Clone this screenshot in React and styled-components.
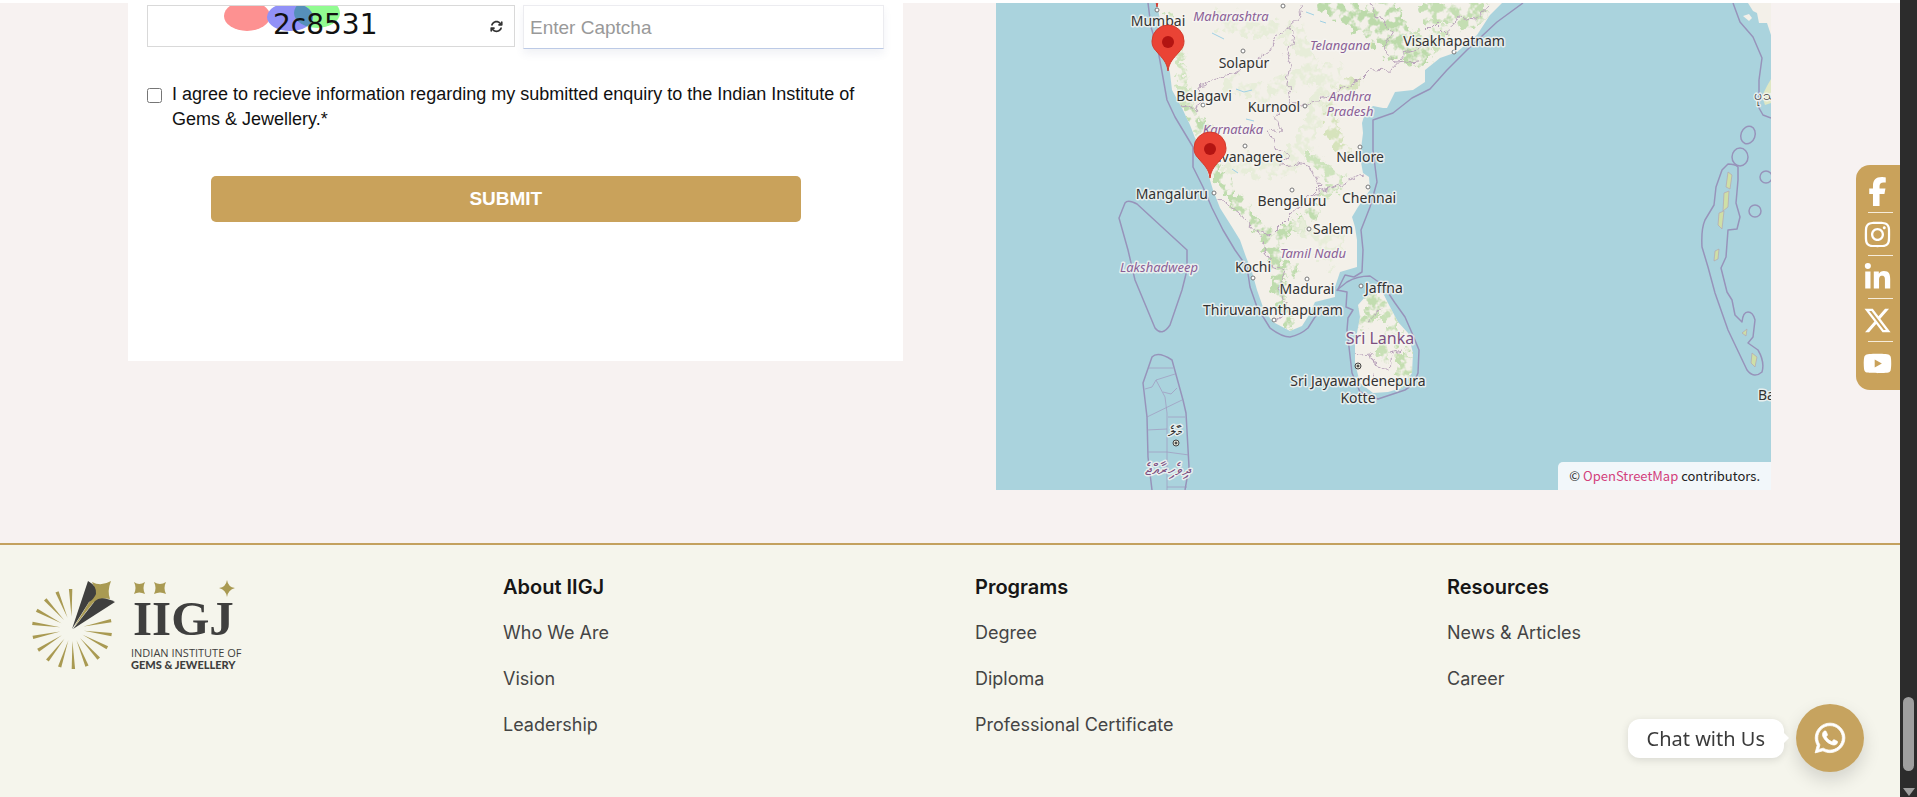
import React from 'react'
import styled, { createGlobalStyle } from "styled-components"
import { FaFacebookF, FaInstagram, FaLinkedinIn, FaXTwitter, FaYoutube, FaWhatsapp, FaArrowsRotate } from "react-icons/fa6"


const GlobalStyle = createGlobalStyle`
* {
  box-sizing: border-box;
}
body {
  margin: 0;
  background-color: #ffffff;
  font-family: "Liberation Sans", Arial, sans-serif;
}
a {
  text-decoration: none;
}
`

const Shell = styled.div`
display: flex;
height: 100vh;
overflow: hidden;
`
const Page = styled.div`
flex: 1;
min-width: 0;
display: flex;
flex-direction: column;
padding-top: 3px;
`

/* enquiry section */
const Enquiry = styled.section`
display: grid;
grid-template-columns: 1fr 1fr;
column-gap: 93px;
align-items: start;
padding: 0 129px 53px 128px;
background-color: #f7f2f1;
`
const Form = styled.form`
display: flex;
flex-direction: column;
padding: 2px 19px 139px;
background-color: #ffffff;
`
const CaptchaRow = styled.div`
display: grid;
grid-template-columns: 368px 1fr;
column-gap: 8px;
align-items: start;
`
const CaptchaBox = styled.div`
position: relative;
display: flex;
align-items: center;
justify-content: center;
height: 42px;
border: 1px solid #d9d9d9;
overflow: hidden;
`
const CaptchaSvg = styled.svg`
display: block;
width: 250px;
height: 40px;
`
const Refresh = styled.button`
position: absolute;
right: 11px;
top: 14px;
display: flex;
padding: 0;
border: none;
background: none;
color: #333333;
font-size: 13px;
cursor: pointer;
`
const CaptchaInput = styled.input`
width: 100%;
height: 44px;
padding: 2px 6px 0;
border: 1px solid #ececf0;
border-bottom-color: #bccae6;
box-shadow: 0 5px 8px rgba(80, 90, 140, 0.08);
font-family: inherit;
font-size: 19px;
color: #222222;
outline: none;
  &::placeholder {
    color: #999999;
    opacity: 1;
  }
`
const Agree = styled.label`
display: flex;
align-items: flex-start;
gap: 10px;
margin-top: 33px;
font-size: 18px;
line-height: 25px;
color: #111111;
`
const Tick = styled.input`
flex: none;
width: 15px;
height: 15px;
margin: 6px 0 0;
`
const Submit = styled.button`
width: 80%;
height: 46px;
margin-top: 44px;
margin-left: 64px;
border: none;
border-radius: 5px;
background-color: #c9a25b;
color: #ffffff;
font-family: inherit;
font-size: 19px;
font-weight: bold;
cursor: pointer;
`

/* map */
const MapBox = styled.div`
position: relative;
height: 487px;
overflow: hidden;
background-color: #aad3dd;
`
const MapSvg = styled.svg`
display: block;
width: 100%;
height: 100%;
font-family: "Noto Sans", sans-serif;
`
const City = styled.text`
font-size: 14px;
fill: #333333;
stroke: #f7f6f3;
stroke-opacity: 0.8;
stroke-width: 3px;
stroke-linejoin: round;
paint-order: stroke;
`
const State = styled(City)`
font-size: 13px;
font-style: italic;
fill: #8a5f97;
`
const Country = styled(City)`
font-size: 16px;
fill: #7d4f80;
`
const Attribution = styled.div`
position: absolute;
right: 0;
bottom: 0;
padding: 0 11px;
border-top-left-radius: 5px;
background-color: #f2f7fa;
color: #222222;
font-family: "Noto Sans CJK SC", sans-serif;
font-size: 13px;
line-height: 28px;
  a {
    color: #d2407c;
  }
`

/* footer */
const Footer = styled.footer`
flex: 1;
display: grid;
grid-template-columns: repeat(4, 1fr);
column-gap: 48px;
align-items: start;
padding: 29px 29px 29px 31px;
border-top: 2px solid #c3a15f;
background-color: #f5f5ec;
font-family: Inter, sans-serif;
`
const LogoLink = styled.a`
display: block;
margin-top: 5px;
`
const FootTitle = styled.h4`
margin: 0 0 20px;
font-size: 20px;
font-weight: 600;
line-height: 26px;
color: #161616;
`
const FootList = styled.ul`
display: flex;
flex-direction: column;
gap: 20px;
margin: 0;
padding: 0;
list-style: none;
`
const FootLink = styled.a`
display: block;
font-size: 18px;
line-height: 26px;
color: #444444;
`

/* floating bits */
const Social = styled.nav`
position: fixed;
right: 17px;
top: 165px;
display: flex;
flex-direction: column;
width: 44px;
height: 225px;
padding: 5px 7px 0 0;
border-radius: 14px 0 0 14px;
background-color: #c9a25b;
`
const SocialLink = styled.a`
display: flex;
align-items: center;
justify-content: center;
height: 42px;
padding-left: 6px;
color: #ffffff;
font-size: 29px;
`
const Rule = styled.hr`
align-self: flex-end;
width: 25px;
height: 1px;
margin: 0;
border: none;
background-color: #f6ecda;
`
const Chat = styled.div`
position: fixed;
right: 53px;
bottom: 25px;
display: flex;
align-items: center;
gap: 12px;
`
const ChatBubble = styled.span`
position: relative;
padding: 0 19px;
border-radius: 12px;
background-color: #ffffff;
box-shadow: 0 2px 8px rgba(0, 0, 0, 0.12);
color: #3a3a3a;
font-family: "Noto Sans", sans-serif;
font-size: 20px;
line-height: 39px;
  &::after {
    content: "";
    position: absolute;
    left: 100%;
    top: 14px;
    border: 5px solid transparent;
    border-left-color: #ffffff;
    border-right: none;
  }
`
const ChatButton = styled.a`
display: flex;
align-items: center;
justify-content: center;
width: 68px;
height: 68px;
border-radius: 50%;
background-color: #c6a35f;
box-shadow: 0 8px 18px rgba(0, 0, 0, 0.14);
color: #ffffff;
font-size: 34px;
  svg {
    stroke: #ffffff;
    stroke-width: 12px;
  }
`
const ScrollTrack = styled.div`
display: flex;
flex-direction: column;
align-items: center;
justify-content: flex-end;
gap: 17px;
width: 17px;
background-color: #2c2c2c;
`
const ScrollThumb = styled.div`
width: 11px;
height: 74px;
border-radius: 6px;
background-color: #9f9f9f;
`
const ScrollArrow = styled.div`
border: 6px solid transparent;
border-top: 8px solid #9f9f9f;
border-bottom: none;
margin-bottom: 1px;
`


const cities = [
  ["Mumbai", 162, 23, "middle"],
  ["Solapur", 248, 65, "middle"],
  ["Visakhapatnam", 458, 43, "middle"],
  ["Belagavi", 208, 98, "middle"],
  ["Kurnool", 278, 109, "middle"],
  ["Davanagere", 287, 159, "end"],
  ["Nellore", 364, 159, "middle"],
  ["Mangaluru", 212, 196, "end"],
  ["Bengaluru", 296, 203, "middle"],
  ["Chennai", 346, 200, "start"],
  ["Salem", 317, 231, "start"],
  ["Kochi", 257, 269, "middle"],
  ["Madurai", 311, 291, "middle"],
  ["Thiruvananthapuram", 277, 312, "middle"],
  ["Jaffna", 369, 290, "start"],
  ["Sri Jayawardenepura", 362, 383, "middle"],
  ["Kotte", 362, 400, "middle"],
  ["Ba", 762, 397, "start"],
  ["ပုသ", 758, 97, "start"],
  ["މާލެ", 179, 433, "middle"],
]

const states = [
  ["Maharashtra", 235, 18],
  ["Telangana", 344, 47],
  ["Andhra", 354, 98],
  ["Pradesh", 354, 113],
  ["Karnataka", 237, 131],
  ["Tamil Nadu", 317, 255],
  ["Lakshadweep", 163, 269],
]

const dots = [
  [161, 7], [247, 48], [287, 3], [207, 102], [309, 103], [249, 143], [364, 144], [458, 49],
  [218, 190], [296, 187], [372, 184], [313, 226], [257, 275], [311, 276], [278, 317], [365, 283],
]

const capitals = [[362, 363], [180, 440]]

const pins = [[161, 4], [172, 68], [214, 175]]

const INDIA = "M161 0L164 17 167 40 174 70 176 87 186 105 194 122 201 140 211 167 217 187 224 205 236 224 244 237 250 254 256 269 261 287 268 307 277 319 294 328 306 323 313 312 319 299 339 294 339 284 344 269 361 264 361 237 359 224 356 214 362 204 374 187 373 174 367 170 364 154 367 130 366 120 369 110 377 103 387 105 391 105 399 89 417 87 429 79 429 67 444 55 461 49 481 32 494 12 506 0Z"
const LANKA = "M369 294L380 289 387 290 392 300 402 319 412 330 417 350 416 370 406 385 392 389 377 390 364 380 359 360 359 340 364 314 362 302Z"

const Pin = ({ x, y }) => (
  <g transform={`translate(${x} ${y})`}>
    <path d="M0 0C-1 -9 -6 -13 -11 -19C-15 -23 -16 -26 -16 -30A16 16 0 0 1 16 -30C16 -26 15 -23 11 -19C6 -13 1 -9 0 0Z" fill="#ea4335" stroke="#d33a2c" strokeWidth="1" />
    <circle cy="-29" r="6" fill="#b31412" />
  </g>
)

const RegionMap = () => {
  return (
    <MapSvg viewBox="0 0 775 487" preserveAspectRatio="xMidYMid slice" role="img" aria-label="Map of southern India and Sri Lanka">
      <defs>
        <filter id="rough" x="-5%" y="-5%" width="110%" height="110%">
          <feTurbulence type="fractalNoise" baseFrequency="0.09" numOctaves="3" seed="4" result="n" />
          <feDisplacementMap in="SourceGraphic" in2="n" scale="12" xChannelSelector="R" yChannelSelector="G" />
        </filter>
        <filter id="patchy" x="-10%" y="-10%" width="120%" height="120%">
          <feTurbulence type="fractalNoise" baseFrequency="0.11" numOctaves="3" seed="9" result="n" />
          <feColorMatrix in="n" type="matrix" values="0 0 0 0 0  0 0 0 0 0  0 0 0 0 0  6 0 0 0 -2.4" result="mask" />
          <feDisplacementMap in="SourceGraphic" in2="n" scale="26" xChannelSelector="R" yChannelSelector="G" result="d" />
          <feComposite in="d" in2="mask" operator="in" />
        </filter>
        <clipPath id="land">
          <path d={INDIA} />
          <path d={LANKA} />
        </clipPath>
      </defs>

      <path d={INDIA} fill="#f3f0e9" />
      <path d={LANKA} fill="#f3f0e9" />
      <path d="M752 0L757 8 761 10 763 20 771 20 775 32V0Z" fill="#f3f0e9" />
      <path d="M747 13L753 11 756 15 753 18Z" fill="#f3f0e9" />
      <path d="M775 76L771 83 766 93 769 102 775 100Z" fill="#dfe8c4" />

      <g clipPath="url(#land)">
        <g filter="url(#patchy)" fill="none" strokeLinecap="round" strokeLinejoin="round">
          <path d="M174 14L184 50 188 85 198 112 206 134" stroke="#cfe4be" strokeWidth="10" />
          <path d="M196 112L214 128 204 136" stroke="#bfdcae" strokeWidth="12" />
          <path d="M218 160L230 182 250 208 270 230 282 236 306 222 318 206" stroke="#bfdcae" strokeWidth="12" />
          <path d="M270 230L282 256 286 274 284 296 292 318" stroke="#bfdcae" strokeWidth="12" />
          <path d="M278 262L300 266" stroke="#bfdcae" strokeWidth="9" />
          <path d="M330 94L334 112 340 134 350 150" stroke="#d6e3bc" strokeWidth="13" />
          <path d="M330 94L350 84 362 80" stroke="#d6e3bc" strokeWidth="10" />
          <path d="M318 156L336 172 346 180 330 190" stroke="#cde3bc" strokeWidth="12" />
          <path d="M334 0L352 8 372 18 392 34 402 48" stroke="#bcdaaa" strokeWidth="24" />
          <path d="M388 2L398 20 410 44 424 52" stroke="#bcdaaa" strokeWidth="24" />
          <path d="M436 10L458 14 482 8" stroke="#c4deb2" strokeWidth="22" />
          <path d="M420 42L446 34" stroke="#cde3bc" strokeWidth="18" />
          <path d="M374 296L386 300 376 312 366 318" stroke="#c2ddb0" strokeWidth="15" />
          <path d="M390 306L402 324 392 332 388 352" stroke="#c8e0b6" strokeWidth="12" />
          <path d="M404 350L414 364 404 378" stroke="#c4deb0" strokeWidth="15" />
        </g>
        <g filter="url(#patchy)" fill="none" stroke="#e7edd9" strokeWidth="18">
          <path d="M220 20L300 30 320 70 270 90 230 80" />
          <path d="M230 160L290 165 310 140 340 60" />
          <path d="M300 220L340 240 330 260" />
        </g>
        <g fill="none" stroke="#9fd0e4" strokeWidth="1">
          <path d="M216 30L224 34 228 36" />
          <path d="M240 86L248 89 256 87" />
          <path d="M310 9L318 12" />
          <path d="M236 166L242 170" />
          <path d="M250 116L258 118" />
          <path d="M324 18L330 20" />
        </g>
        <g filter="url(#rough)" fill="none" stroke="#b9a3bb" strokeWidth="1">
          <path d="M186 105L194 104 201 109 204 97 202 84 211 82 224 72 241 69 254 62 264 55 274 47 281 34 293 27 297 31 294 47 290 57 294 64 291 84 293 99 284 110 279 114 283 126 274 129 278 141 291 151 288 162 304 160 314 164 324 184 318 190" />
          <path d="M296 99L309 102 328 96 343 86 364 77 374 67 396 66 410 50 432 44" />
          <path d="M303 0L305 12 296 20 293 27" />
          <path d="M218 192L234 204 248 214 258 227 274 231 284 221 294 211 314 194 323 189 344 181 361 174 368 172" />
          <path d="M261 227L269 244 274 257 276 264 288 268 284 284 290 300 281 319" />
          <path d="M372 0L382 16 398 28 388 44 398 60 420 58" />
          <path d="M432 28L440 20 452 32 462 14 480 16 492 2" />
          <path d="M359 352L374 350 378 362 392 366 394 350 406 346" />
          <path d="M370 318L388 306" />
          <path d="M374 380L378 368" />
        </g>
      </g>

      <g fill="none" stroke="#9489b5" strokeWidth="1.5" strokeLinejoin="round" opacity="0.85">
        <path d="M152 0L155 24 162 47 166 69 171 97 179 114 191 134 197 144 197 164 207 184 216 205 227 227 239 247 251 264 254 284 261 304 274 325 Q286 334 294 334 Q304 332 312 325L319 314 324 306 342 304" />
        <path d="M341 288L349 272 358 274 366 269 367 247 365 227 374 204 381 179 377 147 377 117 397 110 416 95 434 86 451 67 471 47 501 19 527 0" />
        <path d="M341 287L351 279Q361 273 374 273L387 282 399 300 409 314 416 330 423 347 422 370 Q418 382 409 387L382 396 364 389 356 370 353 344 351 327 352 315 357 307 350 304 351 289Z" />
        <path d="M123 215L129 200Q132 196 141 201L191 247V267L186 287 174 322Q166 334 159 325L139 277 132 247Z" />
        <path d="M156 487L152 454 151 414 147 380 156 354Q162 348 176 357L187 397 190 410 193 464 189 487" />
        <path d="M732 161L726 167 720 184 718 202 709 217Q705 226 706 244L712 264 719 290 732 327 751 367Q758 376 766 369Q769 359 762 347L752 340 757 334 759 317Q757 309 752 309T746 319L739 312 736 297 731 289 725 265 730 254 732 227 741 226 744 214 740 200 742 177 742 164Q739 161 732 161Z" />
        <path d="M737 0L744 19 757 34 766 55 763 77 763 105 767 112 775 115" />
        <ellipse cx="752" cy="132" rx="7" ry="9" transform="rotate(20 752 132)" />
        <ellipse cx="744" cy="154" rx="8" ry="9" />
        <circle cx="770" cy="174" r="6" />
        <circle cx="759" cy="208" r="6" />
      </g>
      <g fill="none" stroke="#9f97bd" strokeWidth="1" opacity="0.7">
        <path d="M152 365H177M149 386L156 384 160 377 179 371M160 377L169 394 171 410V487M151 414L186 397M151 427L171 426M152 449H171L193 452M171 484H191M167 389L175 391 181 385M172 414H189" />
      </g>
      <g fill="#cfdfa6" stroke="#b3a6b0" strokeWidth="0.7">
        <path d="M732 169L736 172 734 186 730 184Z" />
        <path d="M728 190L733 188 732 204 727 208Z" />
        <path d="M723 210L728 208 726 226 722 222Z" />
        <path d="M719 248L723 246 722 256 718 258Z" />
        <path d="M756 350L761 354 759 364 755 360Z" />
        <path d="M746 330L751 326 750 333Z" />
      </g>

      {states.map(([name, x, y]) => (
        <State key={name} x={x} y={y} textAnchor="middle">{name}</State>
      ))}
      {dots.map(([x, y]) => (
        <circle key={`${x}-${y}`} cx={x} cy={y} r="2" fill="#ffffff" stroke="#777777" strokeWidth="1" />
      ))}
      {capitals.map(([x, y]) => (
        <g key={x} fill="#e6e6d8" stroke="#444444" strokeWidth="1">
          <circle cx={x} cy={y} r="3" />
          <circle cx={x} cy={y} r="1" fill="#444444" />
        </g>
      ))}
      {cities.map(([name, x, y, anchor]) => (
        <City key={name} x={x} y={y} textAnchor={anchor}>{name}</City>
      ))}
      <Country x="384" y="341" textAnchor="middle">Sri Lanka</Country>
      <Country x="172" y="472" textAnchor="middle">ދިވެހިރާއްޖެ</Country>
      {pins.map(([x, y]) => <Pin key={x} x={x} y={y} />)}
    </MapSvg>
  )
}

const rays = Array.from({ length: 15 }, (_, i) => -2 - i * 20)

const Logo = () => (
  <svg width="224" height="94" viewBox="0 0 224 94" role="img" aria-label="IIGJ">
    <g fill="#a99a52">
      {rays.map((deg) => (
        <path key={deg} d="M0 -12L-1.7 -40H1.7Z" transform={`translate(41 50) rotate(${deg})`} />
      ))}
      <path d="M61 3Q70 8 80 2Q76 12 79 20Q70 18 62 24L43 48L60 20Q66 12 61 3Z" />
      <path d="M103 3Q108 7 114 3Q111 9 114 15Q108 12 103 15Q106 9 103 3Z" />
      <path d="M123 3Q129 7 135 3Q132 9 135 15Q129 12 123 15Q126 9 123 3Z" />
      <path d="M196 1Q197 8 204 9Q197 11 196 18Q195 11 188 9Q195 8 196 1Z" />
    </g>
    <g fill="#3f3f3e">
      <path d="M41 50L57 2Q66 7 65 15Q63 20 58 23Z" />
      <path d="M42 50L64 22Q70 16 84 23Z" />
      <text x="102" y="56" fontFamily="Liberation Serif, serif" fontWeight="bold" fontSize="49">IIGJ</text>
      <text x="100" y="78" fontFamily="Open Sans, sans-serif" fontSize="11">INDIAN INSTITUTE OF</text>
      <text x="100" y="90" fontFamily="Lato, sans-serif" fontWeight="900" fontSize="11">GEMS &amp; JEWELLERY</text>
    </g>
  </svg>
)

const CaptchaImage = () => (
  <CaptchaSvg viewBox="0 0 250 40" role="img" aria-label="Captcha 2c8531">
    <defs>
      <clipPath id="blueBlob">
        <ellipse cx="84" cy="11" rx="23" ry="14" />
      </clipPath>
    </defs>
    <ellipse cx="41" cy="10" rx="23" ry="15" fill="#fd9191" />
    <ellipse cx="111" cy="7" rx="23" ry="15" fill="#91fb91" />
    <ellipse cx="84" cy="11" rx="23" ry="14" fill="#9191f7" />
    <ellipse cx="111" cy="7" rx="23" ry="15" fill="#5690bb" clipPath="url(#blueBlob)" />
    <text x="67" y="28" fontFamily="DejaVu Sans, sans-serif" fontSize="28" fill="#111111">2c8531</text>
  </CaptchaSvg>
)

const columns = [
  { title: "About IIGJ", links: ["Who We Are", "Vision", "Leadership"] },
  { title: "Programs", links: ["Degree", "Diploma", "Professional Certificate"] },
  { title: "Resources", links: ["News & Articles", "Career"] },
]

const socials = [
  ["Facebook", FaFacebookF],
  ["Instagram", FaInstagram],
  ["LinkedIn", FaLinkedinIn],
  ["X", FaXTwitter],
  ["YouTube", FaYoutube],
]

const App = () => {
  return (
    <Shell>
      <GlobalStyle />
      <Page>
        <Enquiry>
          <Form onSubmit={(e) => e.preventDefault()}>
            <CaptchaRow>
              <CaptchaBox>
                <CaptchaImage />
                <Refresh type="button" aria-label="Refresh captcha"><FaArrowsRotate /></Refresh>
              </CaptchaBox>
              <CaptchaInput type="text" placeholder="Enter Captcha" aria-label="Enter Captcha" />
            </CaptchaRow>
            <Agree>
              <Tick type="checkbox" />
              <span>I agree to recieve information regarding my submitted enquiry to the Indian Institute of Gems &amp; Jewellery.*</span>
            </Agree>
            <Submit type="submit">SUBMIT</Submit>
          </Form>

          <MapBox>
            <RegionMap />
            <Attribution>© <a href="#osm">OpenStreetMap</a> contributors.</Attribution>
          </MapBox>
        </Enquiry>

        <Footer>
          <LogoLink href="#home"><Logo /></LogoLink>
          {columns.map((col) => (
            <div key={col.title}>
              <FootTitle>{col.title}</FootTitle>
              <FootList>
                {col.links.map((link) => (
                  <li key={link}><FootLink href="#page">{link}</FootLink></li>
                ))}
              </FootList>
            </div>
          ))}
        </Footer>
      </Page>

      <ScrollTrack>
        <ScrollThumb />
        <ScrollArrow />
      </ScrollTrack>

      <Social>
        {socials.map(([name, Icon], i) => (
          <React.Fragment key={name}>
            {i > 0 && <Rule />}
            <SocialLink href="#social" aria-label={name}><Icon /></SocialLink>
          </React.Fragment>
        ))}
      </Social>

      <Chat>
        <ChatBubble>Chat with Us</ChatBubble>
        <ChatButton href="#chat" aria-label="Chat on WhatsApp"><FaWhatsapp /></ChatButton>
      </Chat>
    </Shell>
  )
}

export default App
